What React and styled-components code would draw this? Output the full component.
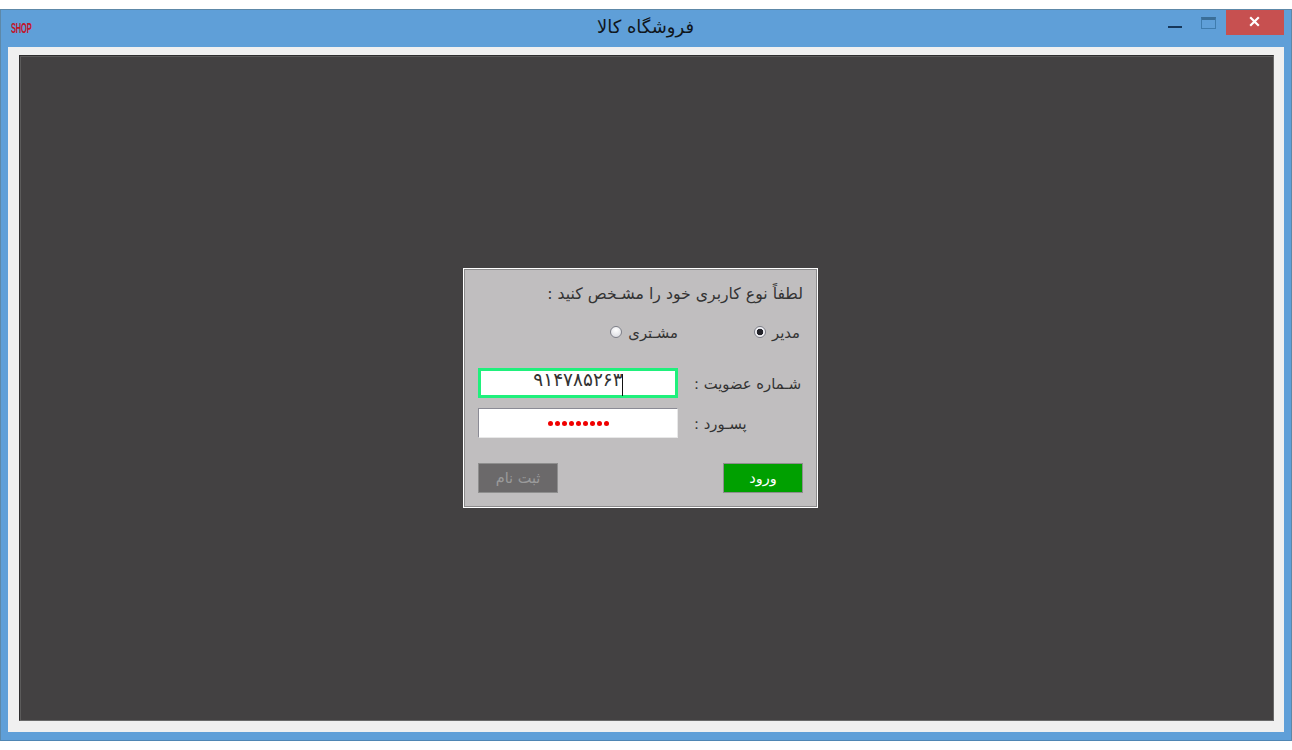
import React from 'react';
import styled, { createGlobalStyle } from 'styled-components';

const Global = createGlobalStyle`
  html, body { margin: 0; padding: 0; background: #fff; }
  body { font-family: "DejaVu Sans", "Noto Sans", sans-serif; overflow: hidden; }
`;
const Page = styled.div`
  width: 1292px; height: 750px; padding-top: 9px; box-sizing: border-box;
`;
const Win = styled.div`
  height: 732px; box-sizing: border-box; background: #5f9fd8;
  border: 1px solid #5d88a8; border-bottom-color: #4f86b4;
  display: flex; flex-direction: column; padding: 0 7px 8px;
`;
const TitleBar = styled.div`
  height: 37px; flex: none; display: grid; grid-template-columns: 1fr auto 1fr;
`;
const Logo = styled.div`
  font: bold 15px/14px "Liberation Sans", sans-serif; color: #c4142a;
  transform: scaleX(.5); transform-origin: left center;
  margin: 11px 0 0 3px; letter-spacing: -.3px;
`;
const Title = styled.div`
  font-size: 18px; line-height: 37px; color: #10161c; padding-right: 1px; margin-top: -2px;
`;
const Controls = styled.div`display: flex; justify-content: flex-end; align-items: flex-start;`;
const MinBtn = styled.div`
  width: 14px; height: 2px; background: #16375a; margin: 16px 19px 0 0;
`;
const MaxBtn = styled.div`
  width: 15px; height: 12px; box-sizing: border-box; border: 1px solid #3f7cae; border-top: 3px solid #3a6e98;
  margin: 7px 10px 0 0;
`;
const CloseBtn = styled.div`
  width: 58px; height: 25px; background: #c75050; display: flex; align-items: center; justify-content: center;
  padding: 0 2px 2px 0; box-sizing: border-box;
`;
const Client = styled.div`
  flex: 1; background: #f0f0f0; padding: 8px 10px 11px 11px; display: flex;
`;
const Canvas = styled.div`
  flex: 1; background: #434142; box-sizing: border-box; border: 1px solid #2e2d2e;
  border-right-color: #6a6a6a; border-bottom-color: #6a6a6a;
  box-shadow: inset 1px 1px 0 #5c5b5b;
  display: flex; align-items: center; justify-content: center; padding-right: 12px;
`;
const Dialog = styled.div`
  width: 355px; height: 240px; box-sizing: border-box; background: #c0bebf;
  border: 1px solid #fff; outline: 1px solid #8d8c8d; outline-offset: -2px;
  padding: 0 14px; direction: rtl; display: flex; flex-direction: column;
  color: #333; font-size: 14.8px;
`;
const Prompt = styled.div`font-size: 15.7px; line-height: 20px; margin-top: 15px; white-space: nowrap;`;
const RadioRow = styled.div`
  display: flex; margin-top: 19px; height: 20px; align-items: center; padding-right: 3px;
`;
const RadioItem = styled.label`
  display: flex; align-items: center; gap: 6px; width: ${p => p.$w}px; line-height: 20px;
`;
const Radio = styled.span`
  width: 10px; height: 10px; border-radius: 50%; border: 1px solid #7d7f88; position: relative; top: -1px;
  background: ${p => p.$on
    ? 'radial-gradient(circle at center, #23232a 0 3px, #f0f0f4 3.6px)'
    : 'radial-gradient(circle at 50% 30%, #fff, #d5d6dc)'};
  flex: none;
`;
const FieldRow = styled.div`
  display: flex; height: 30px; align-items: center; margin-top: ${p => p.$mt}px;
`;
const Label = styled.div`
  width: 125px; box-sizing: border-box; flex: none; line-height: 30px; padding: 1px 2px 0 16px;
  white-space: nowrap; display: flex; justify-content: flex-end;
`;
const Field = styled.div`
  width: 200px; height: 30px; box-sizing: border-box; background: #fff; display: flex; align-items: center;
  justify-content: center; direction: ltr;
  border: ${p => p.$active ? '3px solid #1ff07c' : '1px solid #8b8b95'};
  ${p => !p.$active && 'border-bottom-color:#e8e8e8;border-right-color:#e8e8e8;'}
  color: #333;
`;
const Caret = styled.span`width: 1px; height: 22px; background: #111; margin-left: -1px; margin-top: 3px;`;
const Digits = styled.span`
  direction: rtl; unicode-bidi: plaintext; position: relative; top: -3px; font-size: 18.5px; line-height: 22px;
`;
const Dots = styled.span`display: flex;`;
const Dot = styled.span`width: 5px; height: 5px; border-radius: 50%; background: #f00000; margin: 0 1px;`;
const Buttons = styled.div`display: flex; justify-content: space-between; margin-top: 25px;`;
const Button = styled.div`
  width: 80px; height: 30px; box-sizing: border-box; display: flex; align-items: center; justify-content: center;
  border: 1px solid #8e8e8e; background: ${p => p.$bg}; color: ${p => p.$fg}; font-size: 14.5px;
`;

export default function App() {
  return (
    <Page>
      <Global />
      <Win>
        <TitleBar>
          <Logo>SHOP</Logo>
          <Title>فروشگاه کالا</Title>
          <Controls>
            <MinBtn />
            <MaxBtn />
            <CloseBtn>
              <svg width="11" height="11" viewBox="0 0 11 11"><path d="M1.2 1.2 9.8 9.8M9.8 1.2 1.2 9.8" stroke="#fff" strokeWidth="2.2" /></svg>
            </CloseBtn>
          </Controls>
        </TitleBar>
        <Client>
          <Canvas>
            <Dialog>
              <Prompt>لطفاً نوع کاربری خود را مشـخص کنید :</Prompt>
              <RadioRow>
                <RadioItem $w={122}><span>مدیر</span><Radio $on /></RadioItem>
                <RadioItem $w={80}><span>مشـتری</span><Radio /></RadioItem>
              </RadioRow>
              <FieldRow $mt={25}>
                <Label>شـماره عضویت :</Label>
                <Field $active><Digits>۹۱۴۷۸۵۲۶۳</Digits><Caret /></Field>
              </FieldRow>
              <FieldRow $mt={10}>
                <Label>پسـورد :</Label>
                <Field><Dots>{Array.from({ length: 9 }, (_, i) => <Dot key={i} />)}</Dots></Field>
              </FieldRow>
              <Buttons>
                <Button $bg="#00a000" $fg="#fff">ورود</Button>
                <Button $bg="#6b696a" $fg="#9a9a9a">ثبت نام</Button>
              </Buttons>
            </Dialog>
          </Canvas>
        </Client>
      </Win>
    </Page>
  );
}
